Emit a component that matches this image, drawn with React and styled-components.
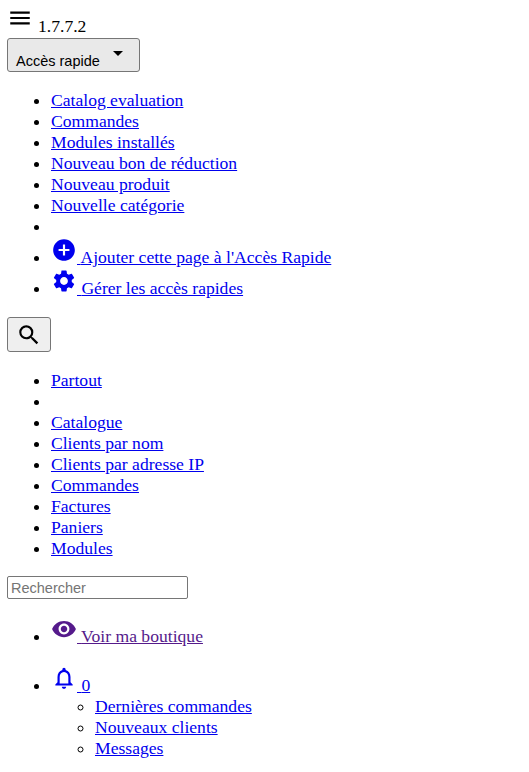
import React from 'react';
import styled, { createGlobalStyle } from 'styled-components';

const GlobalStyle = createGlobalStyle`
  body {
    margin: 5px 7px 8px;
    font-family: "Liberation Serif", "Times New Roman", serif;
    font-size: 17.6px;
    line-height: 21px;
    color: #000;
    background: #fff;
  }
`;

const MenuBar = styled.div`
  display: flex;
  align-items: flex-start;
  height: 33px;
`;

const Version = styled.span`
  margin-left: 5px;
  margin-top: 11px;
`;

const Icon = styled.svg`
  width: 26px;
  height: 26px;
  fill: currentColor;
`;

const QuickButton = styled.button`
  display: flex;
  align-items: flex-end;
  width: 133px;
  height: 34px;
  padding: 0 0 1px 8px;
  background: #e9e9e9;
  border: 1px solid #767676;
  border-radius: 3px;
  font-family: "Liberation Sans", Arial, sans-serif;
  font-size: 14.5px;
  line-height: 17px;
  color: #000;
  position: relative;
`;

const Caret = styled.span`
  position: absolute;
  right: 16px;
  top: 12px;
  border-top: 5px solid #000;
  border-left: 5px solid transparent;
  border-right: 5px solid transparent;
`;

const List = styled.ul`
  margin: ${(p) => p.$top ?? 18}px 0 ${(p) => p.$bottom ?? 18}px;
  padding-left: 44px;
  list-style: disc;
`;

const SubList = styled.ul`
  margin: 0;
  padding-left: 44px;
  list-style: circle;
`;

const Item = styled.li`
  min-height: 21px;
  margin-bottom: ${(p) => p.$gap || 0}px;
`;

const Link = styled.a`
  color: ${(p) => (p.$visited ? '#551a8b' : '#0000ee')};
  text-decoration: underline;
`;

const SearchButton = styled.button`
  display: flex;
  align-items: center;
  justify-content: center;
  width: 44px;
  height: 35px;
  padding: 0;
  background: #efefef;
  border: 1px solid #767676;
  border-radius: 3px;
  color: #000;
`;

const SearchInput = styled.input`
  display: block;
  box-sizing: border-box;
  width: 181px;
  height: 23px;
  padding: 1px 3px;
  border: 1px solid #767676;
  border-radius: 2px;
  font-family: "Liberation Sans", Arial, sans-serif;
  font-size: 14.5px;
  &::placeholder { color: #757575; opacity: 1; }
`;

const quick = ['Catalog evaluation', 'Commandes', 'Modules installés', 'Nouveau bon de réduction', 'Nouveau produit', 'Nouvelle catégorie'];
const scopes = ['Catalogue', 'Clients par nom', 'Clients par adresse IP', 'Commandes', 'Factures', 'Paniers', 'Modules'];
const notifications = ['Dernières commandes', 'Nouveaux clients', 'Messages'];

export default function App() {
  return (
    <>
      <GlobalStyle />
      <MenuBar>
        <Icon viewBox="0 0 24 24"><path d="M3 18h18v-2H3v2zm0-5h18v-2H3v2zm0-7v2h18V6H3z" /></Icon>
        <Version>1.7.7.2</Version>
      </MenuBar>
      <QuickButton>Accès rapide<Caret /></QuickButton>
      <List>
        {quick.map((q) => <Item key={q}><Link href="#">{q}</Link></Item>)}
        <Item />
        <Item>
          <Link href="#">
            <Icon viewBox="0 0 24 24"><path d="M12 2C6.48 2 2 6.48 2 12s4.48 10 10 10 10-4.48 10-10S17.52 2 12 2zm5 11h-4v4h-2v-4H7v-2h4V7h2v4h4v2z" /></Icon>
            {' '}Ajouter cette page à l'Accès Rapide
          </Link>
        </Item>
        <Item>
          <Link href="#">
            <Icon viewBox="0 0 24 24"><path d="M19.14 12.94c.04-.3.06-.61.06-.94 0-.32-.02-.64-.07-.94l2.03-1.58a.49.49 0 0 0 .12-.61l-1.92-3.32a.488.488 0 0 0-.59-.22l-2.39.96c-.5-.38-1.03-.7-1.62-.94l-.36-2.54a.484.484 0 0 0-.48-.41h-3.84c-.24 0-.43.17-.47.41l-.36 2.54c-.59.24-1.13.57-1.62.94l-2.39-.96c-.22-.08-.47 0-.59.22L2.74 8.87c-.12.21-.08.47.12.61l2.03 1.58c-.05.3-.09.63-.09.94s.02.64.07.94l-2.03 1.58a.49.49 0 0 0-.12.61l1.92 3.32c.12.22.37.29.59.22l2.39-.96c.5.38 1.03.7 1.62.94l.36 2.54c.05.24.24.41.48.41h3.84c.24 0 .44-.17.47-.41l.36-2.54c.59-.24 1.13-.56 1.62-.94l2.39.96c.22.08.47 0 .59-.22l1.92-3.32c.12-.22.07-.47-.12-.61l-2.01-1.58zM12 15.6c-1.98 0-3.6-1.62-3.6-3.6s1.62-3.6 3.6-3.6 3.6 1.62 3.6 3.6-1.62 3.6-3.6 3.6z" /></Icon>
            {' '}Gérer les accès rapides
          </Link>
        </Item>
      </List>
      <SearchButton>
        <Icon viewBox="0 0 24 24"><path d="M15.5 14h-.79l-.28-.27A6.471 6.471 0 0 0 16 9.5 6.5 6.5 0 1 0 9.5 16c1.61 0 3.09-.59 4.23-1.57l.27.28v.79l5 4.99L20.49 19l-4.99-5zm-6 0C7.01 14 5 11.99 5 9.5S7.01 5 9.5 5 14 7.01 14 9.5 11.99 14 9.5 14z" /></Icon>
      </SearchButton>
      <List $bottom={17}>
        <Item><Link href="#">Partout</Link></Item>
        <Item />
        {scopes.map((s) => <Item key={s}><Link href="#">{s}</Link></Item>)}
      </List>
      <SearchInput placeholder="Rechercher" />
      <List $top={17}>
        <Item $gap={18}>
          <Link href="#" $visited>
            <Icon viewBox="0 0 24 24"><path d="M12 4.5C7 4.5 2.73 7.61 1 12c1.73 4.39 6 7.5 11 7.5s9.27-3.11 11-7.5c-1.73-4.39-6-7.5-11-7.5zM12 17c-2.76 0-5-2.24-5-5s2.24-5 5-5 5 2.24 5 5-2.24 5-5 5zm0-8c-1.66 0-3 1.34-3 3s1.34 3 3 3 3-1.34 3-3-1.34-3-3-3z" /></Icon>
            {' '}Voir ma boutique
          </Link>
        </Item>
        <Item>
          <Link href="#">
            <Icon viewBox="0 0 24 24"><path d="M12 22c1.1 0 2-.9 2-2h-4c0 1.1.9 2 2 2zm6-6v-5c0-3.07-1.63-5.64-4.5-6.32V4c0-.83-.67-1.5-1.5-1.5s-1.5.67-1.5 1.5v.68C7.64 5.36 6 7.92 6 11v5l-2 2v1h16v-1l-2-2zm-2 1H8v-6c0-2.48 1.51-4.5 4-4.5s4 2.02 4 4.5v6z" /></Icon>
            {' '}0
          </Link>
          <SubList>
            {notifications.map((n) => <Item key={n}><Link href="#">{n}</Link></Item>)}
          </SubList>
        </Item>
      </List>
    </>
  );
}
